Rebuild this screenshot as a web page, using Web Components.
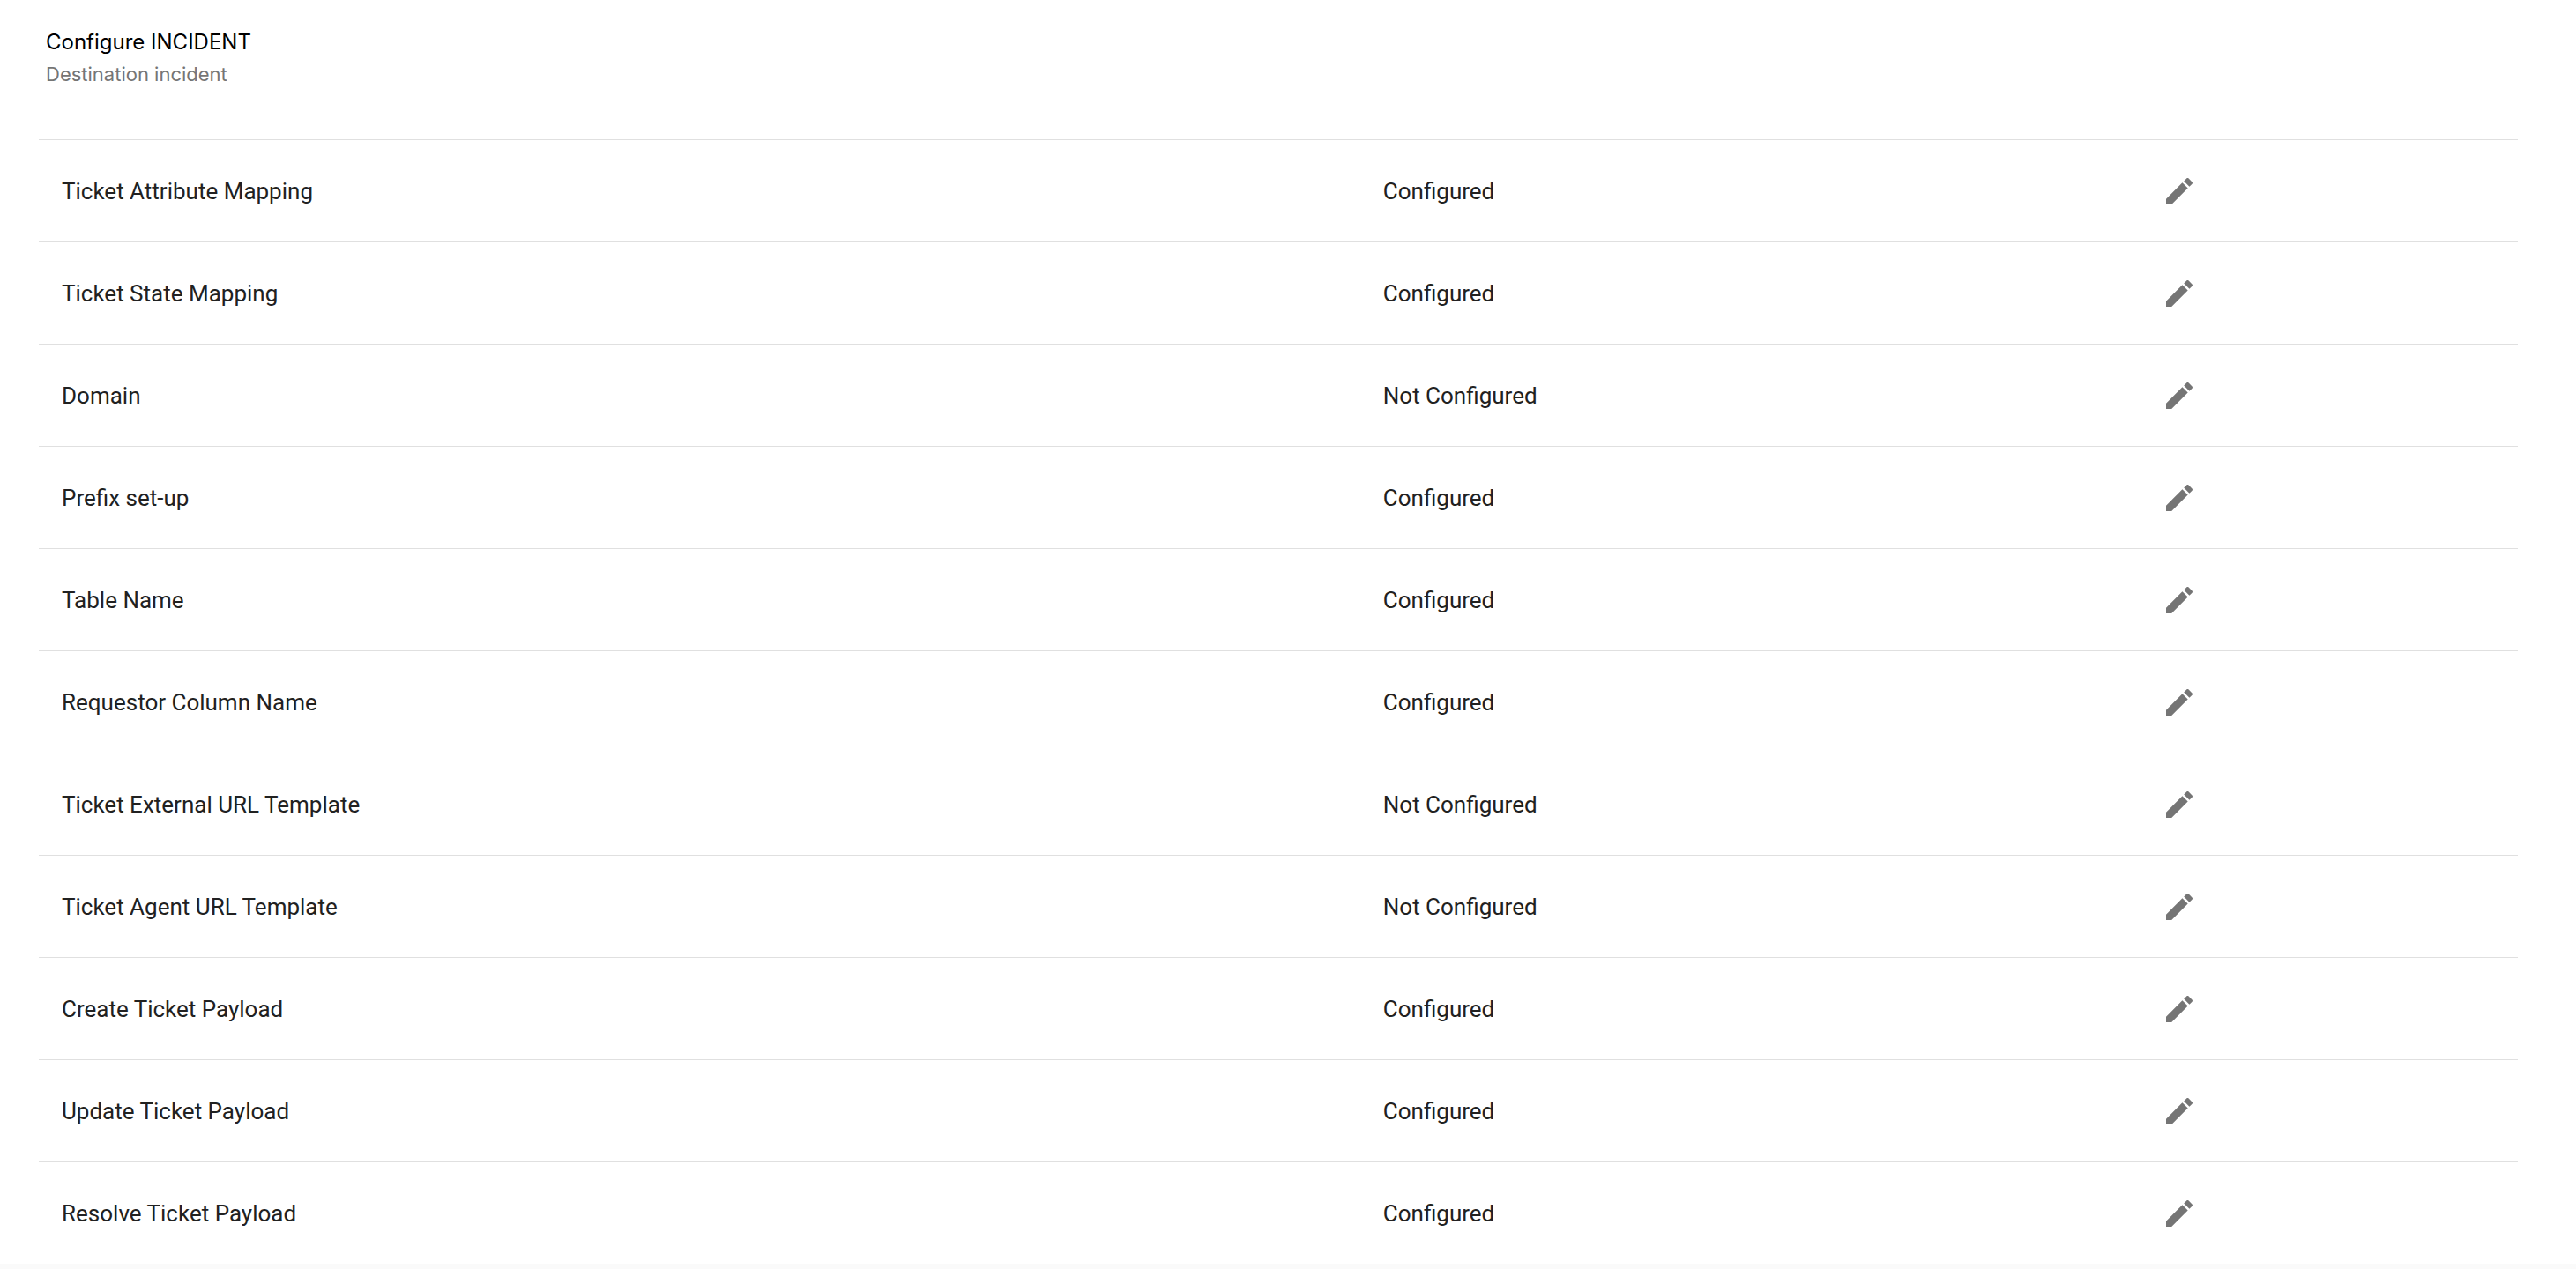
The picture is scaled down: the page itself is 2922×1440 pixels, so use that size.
<!DOCTYPE html>
<html lang="en">
<head>
<meta charset="utf-8">
<title>Configure INCIDENT</title>
<style>
  body {
    margin: 0;
    background: #fafafa;
    font-family: Roboto, "Liberation Sans", sans-serif;
  }
</style>
</head>
<body>
<config-card>
  <span slot="title">Configure INCIDENT</span>
  <span slot="subtitle">Destination incident</span>
  <config-table></config-table>
</config-card>

<script>
class ConfigCard extends HTMLElement {
  constructor() {
    super();
    this.attachShadow({ mode: 'open' });
    this.shadowRoot.innerHTML = `
      <style>
        :host {
          display: block;
          background: #fff;
          padding: 30px 66px 0 44px;
        }
        header {
          padding: 0 8px 56px;
          font-family: Inter, "Liberation Sans", sans-serif;
        }
        h1, p {
          margin: 0;
          font-weight: 400;
          line-height: 36px;
        }
        h1 {
          font-size: 24px;
          color: #000;
        }
        p {
          font-size: 22px;
          color: #757575;
        }
      </style>
      <header>
        <h1><slot name="title"></slot></h1>
        <p><slot name="subtitle"></slot></p>
      </header>
      <slot></slot>
    `;
  }
}

class EditButton extends HTMLElement {
  constructor() {
    super();
    this.attachShadow({ mode: 'open' });
  }

  connectedCallback() {
    const label = this.getAttribute('label') || 'Edit';
    this.shadowRoot.innerHTML = `
      <style>
        :host {
          display: flex;
        }
        button {
          display: flex;
          padding: 20px;
          border: 0;
          border-radius: 50%;
          background: none;
          color: #757575;
          cursor: pointer;
        }
        button:hover {
          background: rgba(0, 0, 0, 0.04);
        }
        svg {
          width: 40px;
          height: 40px;
          fill: currentColor;
        }
      </style>
      <button type="button" aria-label="${label}">
        <svg viewBox="0 0 24 24" aria-hidden="true">
          <path d="M3 17.25V21h3.75L17.81 9.94l-3.75-3.75L3 17.25zM20.71 7.04c.39-.39.39-1.02 0-1.41l-2.34-2.34c-.39-.39-1.02-.39-1.41 0l-1.83 1.83 3.75 3.75 1.83-1.83z"/>
        </svg>
      </button>
    `;
  }
}

class ConfigTable extends HTMLElement {
  constructor() {
    super();
    this.attachShadow({ mode: 'open' });
    this._rows = [
      { name: 'Ticket Attribute Mapping', configured: true },
      { name: 'Ticket State Mapping', configured: true },
      { name: 'Domain', configured: false },
      { name: 'Prefix set-up', configured: true },
      { name: 'Table Name', configured: true },
      { name: 'Requestor Column Name', configured: true },
      { name: 'Ticket External URL Template', configured: false },
      { name: 'Ticket Agent URL Template', configured: false },
      { name: 'Create Ticket Payload', configured: true },
      { name: 'Update Ticket Payload', configured: true },
      { name: 'Resolve Ticket Payload', configured: true }
    ];
  }

  connectedCallback() {
    this.shadowRoot.innerHTML = `
      <style>
        :host {
          display: block;
        }
        table {
          width: 100%;
          table-layout: fixed;
          border-spacing: 0;
        }
        .name {
          width: 53.3%;
        }
        .status {
          width: 30.7%;
        }
        td {
          box-sizing: border-box;
          height: 116px;
          padding: 0 26px;
          border-top: 1px solid #e0e0e0;
          font-size: 26px;
          line-height: 36px;
          color: #212121;
          vertical-align: middle;
        }
      </style>
      <table>
        <colgroup>
          <col class="name">
          <col class="status">
          <col>
        </colgroup>
        <tbody>
          ${this._rows.map((row) => `
            <tr>
              <td>${row.name}</td>
              <td>${row.configured ? 'Configured' : 'Not Configured'}</td>
              <td><edit-button label="Edit ${row.name}"></edit-button></td>
            </tr>
          `).join('')}
        </tbody>
      </table>
    `;
  }
}

customElements.define('config-card', ConfigCard);
customElements.define('edit-button', EditButton);
customElements.define('config-table', ConfigTable);
</script>
</body>
</html>
